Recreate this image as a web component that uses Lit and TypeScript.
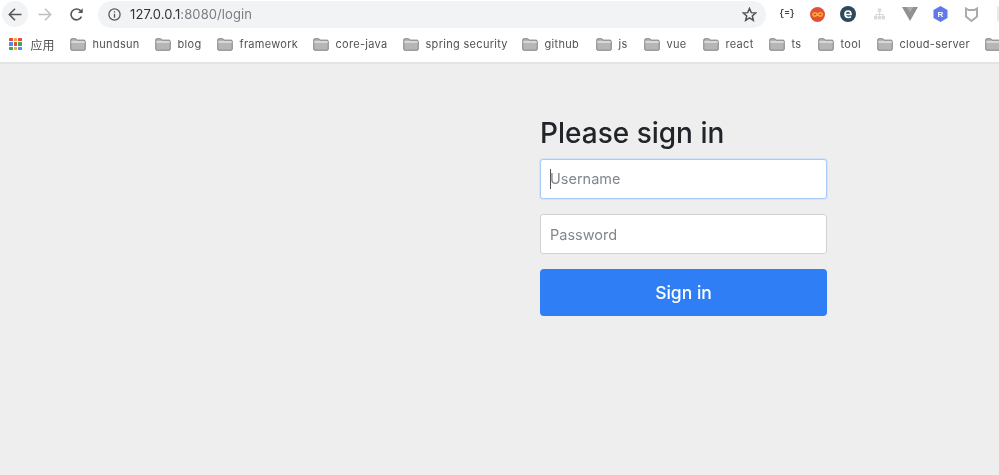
import { LitElement, html, css, svg } from "lit";
import { customElement } from "lit/decorators.js";

const BOOKMARKS: [string, number][] = [["hundsun",85],["blog",62],["framework",96],["core-java",90],["spring security",119],["github",74],["js",48],["vue",59],["react",66],["ts",49],["tool",59],["cloud-server",108],["",30]];
const APPS = ["#e8483f","#f0a92c","#e8483f","#4a8fe8","#e8483f","#39a85a","#39a85a","#f0a92c","#4a8fe8"];

const folder = svg`<svg class="folder" viewBox="0 0 17 14" width="16" height="13">
  <path d="M.7 3V2C.7 1.300 1.200.8 1.900.8h3.900c.5 0 .8.2 1.100.6l.6.9h7.600c.7 0 1.200.5 1.200 1.200V12c0 .7-.5 1.200-1.200 1.200H1.900C1.200 13.200.7 12.700.7 12Z" fill="#b6b6b6" stroke="#7a7a7a" stroke-width="1"/>
  <path d="M1.200 4.300h14.600" stroke="#f2f2f2" stroke-width="1.200"/>
</svg>`;

@customElement("app-root")
export class AppRoot extends LitElement {
  static styles = css`
    :host {
      display: flex;
      flex-direction: column;
      width: 999px;
      height: 475px;
      overflow: hidden;
      background: #eee;
      font-family: Inter, "Liberation Sans", Arial, sans-serif;
      filter: blur(0.35px);
    }
    .chrome { background: #fff; border-bottom: 2px solid #e4e4e4; height: 64px; box-sizing: border-box; flex: none; overflow: hidden; }
    .toolbar { display: flex; align-items: center; height: 28px; }
    .nav { width: 28px; height: 28px; display: flex; align-items: center; justify-content: center; flex: none; }
    .nav.back { width: 26px; height: 26px; margin-left: 2px; background: #f1f3f4; border-radius: 50%; }
    .nav.fwd { margin-left: 3px; }
    .nav.reload { margin-left: 3px; }
    .omni {
      margin-left: 8px;
      width: 668px;
      height: 27px;
      flex: none;
      background: #f1f3f4;
      border-radius: 14px;
      display: flex;
      align-items: center;
      padding: 0 9px 0 10px;
      box-sizing: border-box;
      font-size: 13px;
      letter-spacing: 0.100px;
    }
    .omni .host { color: #2f3236; margin-left: 9px; }
    .omni .path { color: #7b7e82; }
    .omni .star { margin-left: auto; display: block; }
    .exts { display: flex; align-items: center; margin-left: 12px; gap: 12.700px; }
    .ext { width: 18px; height: 18px; display: flex; align-items: center; justify-content: center; flex: none; }
    .ext.last { margin-left: 2px; }
    .curly { font: bold 8.500px "Liberation Mono", monospace; color: #444; white-space: nowrap; }
    .bookmarks { display: flex; align-items: center; height: 32px; padding-left: 9px; font-size: 11px; letter-spacing: 0.300px; color: #505356; white-space: nowrap; }
    .apps { display: grid; grid-template-columns: repeat(3, 3.500px); grid-auto-rows: 3.500px; gap: 1px; margin-right: 9px; flex: none; }
    .apps i { display: block; border-radius: 0.500px; }
    .cjk { font-family: "Noto Sans CJK SC", sans-serif; font-size: 12px; margin-right: 15px; letter-spacing: 0; }
    .bm { display: flex; align-items: center; gap: 7px; flex: none; }
    .folder { display: block; flex: none; margin-top: 1px; }
    main { flex: 1; padding: 51px 0 0 540px; box-sizing: border-box; }
    form { width: 287px; display: flex; flex-direction: column; margin: 0; }
    h2 { margin: 0 0 8px; font-size: 28px; line-height: 36px; font-weight: 500; color: #212529; }
    .field { position: relative; margin-bottom: 15px; }
    input {
      display: block;
      width: 100%;
      height: 40px;
      box-sizing: border-box;
      padding: 0 9px;
      border: 1px solid #d0d3d6;
      border-radius: 3px;
      background: #fff;
      font: 14.500px Inter, "Liberation Sans", Arial, sans-serif;
      outline: none;
    }
    input::placeholder { color: #81878d; opacity: 1; }
    input.focus { border-color: #a9cbf8; box-shadow: 0 0 0 1px #d4e5fb; padding-bottom: 2px; }
    .caret { position: absolute; left: 10px; top: 10px; width: 1px; height: 20px; background: #555; }
    button {
      height: 47px;
      border: 0;
      border-radius: 4px;
      background: #2f7ef6;
      color: #fff;
      font: 500 17.500px Inter, "Liberation Sans", Arial, sans-serif;
      cursor: pointer;
    }
  `;

  render() {
    return html`
      <div class="chrome">
        <div class="toolbar">
          <div class="nav back"><svg width="14" height="13" viewBox="0 0 14 13" fill="none" stroke="#55595d" stroke-width="1.600"><path d="M13.500 6.500H1.500M7 .8 1.300 6.500 7 12.200"/></svg></div>
          <div class="nav fwd"><svg width="14" height="13" viewBox="0 0 14 13" fill="none" stroke="#bcbfc2" stroke-width="1.500"><path d="M.5 6.500h12M7 .8l5.700 5.700L7 12.200"/></svg></div>
          <div class="nav reload"><svg width="15" height="15" viewBox="0 0 16 16" fill="none" stroke="#55595d" stroke-width="1.700"><path d="M13.300 10.200A5.800 5.800 0 1 1 12.200 3.900L14 5.700"/><path d="M14.600 1.300V6.400H9.500Z" fill="#55595d" stroke="none"/></svg></div>
          <div class="omni">
            <svg width="13" height="13" viewBox="0 0 13 13" fill="none" stroke="#55595d" stroke-width="1.300"><circle cx="6.500" cy="6.500" r="5.600"/><path d="M6.500 5.700v4M6.500 3.200v1.300"/></svg>
            <span class="host">127.0.0.1</span><span class="path">:8080/login</span>
            <svg class="star" width="15" height="15" viewBox="0 0 16 16" fill="none" stroke="#4f5256" stroke-width="1.600"><path d="M8 1.600 9.900 6l4.700.4-3.600 3.100 1.100 4.700L8 11.700l-4.100 2.500L5 9.500 1.400 6.400 6.100 6Z"/></svg>
          </div>
          <div class="exts">
            <div class="ext"><span class="curly">{=}</span></div>
            <div class="ext"><svg width="15" height="15" viewBox="0 0 15 15"><circle cx="7.500" cy="7.500" r="7.500" fill="#e2503a"/><path d="M7.500 7.500C6 5.300 2.800 5.200 2.800 7.500S6 9.700 7.500 7.500C9 5.300 12.200 5.200 12.200 7.500S9 9.700 7.500 7.500Z" fill="none" stroke="#f5b52e" stroke-width="1.400"/></svg></div>
            <div class="ext"><svg width="16" height="16" viewBox="0 0 16 16"><circle cx="8" cy="8" r="8" fill="#2b4a5c"/><path d="M5 8.500h6C11 6 9.800 5 8.200 5 6.300 5 5 6.300 5 8.300S6.500 11.500 8.400 11.500c1 0 1.900-.3 2.500-1" fill="none" stroke="#fff" stroke-width="1.700"/></svg></div>
            <div class="ext"><svg width="11" height="12" viewBox="0 0 11 12" fill="#d8dadb"><rect x="3.800" y="0.500" width="3.400" height="3.400"/><path d="M5.500 3.900V8M1.800 8.500V6.500h7.400v2" fill="none" stroke="#d8dadb"/><rect x="0" y="8" width="3.200" height="3.400"/><rect x="3.900" y="8" width="3.200" height="3.400"/><rect x="7.800" y="8" width="3.200" height="3.400"/></svg></div>
            <div class="ext"><svg width="16" height="14" viewBox="0 0 16 14"><path d="M0 0h5l3 5 3-5h5L8 14Z" fill="#8f9293"/><path d="M5 0h6L8 5Z" fill="#6f7273" opacity="0.600"/></svg></div>
            <div class="ext"><svg width="15" height="16" viewBox="0 0 15 16"><path d="M7.500 0 14.500 4v8l-7 4-7-4V4Z" fill="#6078ea"/><text x="7.500" y="11" text-anchor="middle" font-size="8" font-weight="700" font-family="Liberation Sans" fill="#fff">R</text></svg></div>
            <div class="ext"><svg width="13" height="15" viewBox="0 0 13 15"><path d="M1 1.500 3.500 3h6L12 1.500V9.500l-5.500 4.500L1 9.500Z" fill="none" stroke="#a9acad" stroke-width="2"/></svg></div>
            <div class="ext last"><svg width="14" height="16" viewBox="0 0 14 16"><rect width="14" height="16" rx="2" fill="#e9e9e9"/></svg></div>
          </div>
        </div>
        <div class="bookmarks">
          <div class="apps">${APPS.map((c) => html`<i style="background:${c}"></i>`)}</div>
          <span class="cjk" lang="zh">应用</span>
          ${BOOKMARKS.map(([b, w]) => html`<div class="bm" style="width:${w}px">${folder}<span>${b}</span></div>`)}
        </div>
      </div>
      <main>
        <form @submit=${(e: Event) => e.preventDefault()}>
          <h2>Please sign in</h2>
          <div class="field">
            <input class="focus" type="text" placeholder="Username" />
            <span class="caret"></span>
          </div>
          <div class="field"><input type="password" placeholder="Password" /></div>
          <button type="submit">Sign in</button>
        </form>
      </main>
    `;
  }
}
